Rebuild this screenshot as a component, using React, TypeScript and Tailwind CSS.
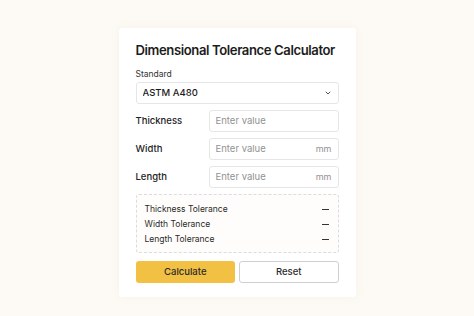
import React, { useState } from "react";
import { ChevronDown } from "lucide-react";

const results = ["Thickness Tolerance", "Width Tolerance", "Length Tolerance"];

export default function App() {
  const [standard, setStandard] = useState("ASTM A480");

  return (
    <div
      className="flex min-h-[316px] w-full items-start justify-center bg-[#fdfaf5] pt-[28px] text-[#1c1c1c]"
      style={{ fontFamily: "Inter, 'Noto Sans', sans-serif" }}
    >
      <div className="w-[237px] rounded-[3px] bg-white px-[17px] pb-[14px] pt-[12px] shadow-[0_0_10px_rgba(200,180,150,0.12)]">
        <h1 className="whitespace-nowrap text-[13.1px] font-semibold leading-[20px] tracking-[-0.4px]">
          Dimensional Tolerance Calculator
        </h1>

        <div className="mt-[8px] text-[8.5px] leading-[12px] text-[#333]">Standard</div>
        <div className="relative mt-[2px] h-[22px]">
          <select
            value={standard}
            onChange={(e) => setStandard(e.target.value)}
            className="block h-[22px] w-full appearance-none rounded-[3px] border border-[#e6e6e6] bg-white pl-[6px] text-[9.5px] font-medium leading-[20px] text-[#1c1c1c] outline-none"
          >
            <option>ASTM A480</option>
            <option>ASTM A240</option>
            <option>EN 10029</option>
          </select>
          <ChevronDown
            className="pointer-events-none absolute right-[7px] top-1/2 h-[8px] w-[8px] -translate-y-1/2 text-[#555]"
            strokeWidth={3}
          />
        </div>

        <div className="mt-[6px] grid grid-cols-[73px_1fr] gap-y-[6px]">
          {["Thickness", "Width", "Length"].map((label) => (
            <React.Fragment key={label}>
              <label className="flex items-center text-[9.5px] font-medium text-[#222]">{label}</label>
              <div className="flex h-[22px] items-center rounded-[3px] border border-[#e6e6e6] bg-white pl-[6px] pr-[6px]">
                <input
                  type="text"
                  placeholder="Enter value"
                  className="w-full min-w-0 bg-transparent text-[9.5px] outline-none placeholder:text-[#929292]"
                />
                {label !== "Thickness" && <span className="text-[9px] text-[#929292]">mm</span>}
              </div>
            </React.Fragment>
          ))}
        </div>

        <div className="mt-[6px] rounded-[3px] border border-dashed border-[#dcdcdc] bg-[#fefdfb] px-[8px] pb-[5px] pt-[7px]">
          {results.map((r) => (
            <div key={r} className="flex h-[15px] items-center justify-between text-[8.5px] text-[#2a2a2a]">
              <span>{r}</span>
              <span className="mr-[1px] h-[1.5px] w-[7px] bg-[#333]" />
            </div>
          ))}
        </div>

        <div className="mt-[8px] grid grid-cols-2 gap-[4px]">
          <button className="h-[22px] rounded-[3px] bg-[#f2c043] text-[9.5px] font-medium text-[#2a2a2a]">
            Calculate
          </button>
          <button className="h-[22px] rounded-[3px] border border-[#cfcfcf] bg-white text-[9.5px] font-medium text-[#2a2a2a]">
            Reset
          </button>
        </div>
      </div>
    </div>
  );
}
